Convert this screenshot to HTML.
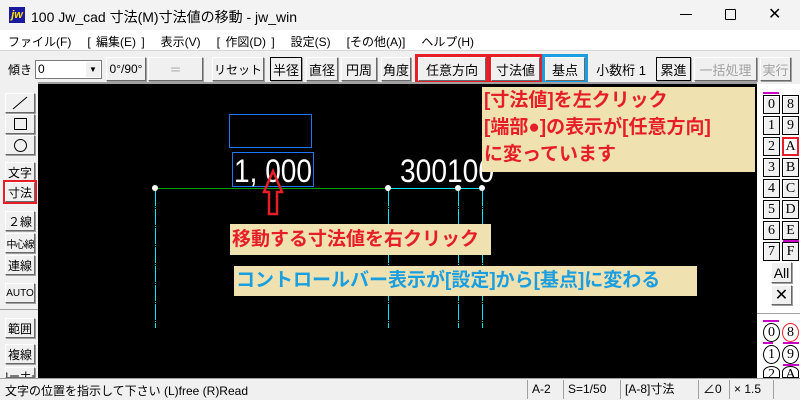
<!DOCTYPE html>
<html><head><meta charset="utf-8">
<style>
*{margin:0;padding:0;box-sizing:border-box}
body{width:800px;height:400px;overflow:hidden;background:#f0f0f0;font-family:"Liberation Sans","Noto Sans CJK JP",sans-serif;position:relative;font-size:12px;color:#000}
.a{position:absolute;white-space:nowrap}
.btn{position:absolute;background:#f0f0f0;border:1px solid #fff;border-right-color:#696969;border-bottom-color:#696969;box-shadow:1px 1px 0 #a0a0a0;display:flex;align-items:center;justify-content:center;font-size:12px;white-space:nowrap;overflow:hidden}
.tb{top:57px;height:24px}
.lb{left:5px;width:30px;height:20px;font-size:12px}
.rb{width:17px;height:19px;font-family:"Liberation Serif","Noto Serif CJK SC",serif;font-size:14px;background:#f0f0f0;border:1px solid #000;box-shadow:inset 1px 1px 0 #fff}
.note{position:absolute;background:#efe2b0;font-size:19px;font-weight:bold;line-height:27px;padding-left:2px;white-space:nowrap}
.sf{position:absolute;top:380px;height:19px;border-left:1px solid #a0a0a0;font-size:12px;padding-left:4px;line-height:18px}
</style></head><body>
<div class="a" style="left:0;top:0;width:800px;height:30px;background:#f3f3f3"></div>
<div class="a" style="left:9px;top:7px;width:16px;height:16px;background:#1a1aa0;color:#ffe000;font-size:11px;font-weight:bold;font-style:italic;line-height:16px;text-align:center">jw</div>
<div class="a" style="left:31px;top:7px;font-size:14px">100 Jw_cad 寸法(M)寸法値の移動 - jw_win</div>
<div class="a" style="left:680px;top:14px;width:12px;height:1px;background:#000"></div>
<div class="a" style="left:725px;top:9px;width:11px;height:11px;border:1px solid #000;border-radius:1px"></div>
<div class="a" style="left:768px;top:4px;font-size:16px">✕</div>
<div class="a" style="left:0;top:30px;width:800px;height:20px;background:#fff"></div>
<div class="a" style="left:8px;top:33px;font-size:12px;word-spacing:2px">ファイル(F)&nbsp;&nbsp;&nbsp;[ 編集(E) ]&nbsp;&nbsp;&nbsp;表示(V)&nbsp;&nbsp;&nbsp;[ 作図(D) ]&nbsp;&nbsp;&nbsp;設定(S)&nbsp;&nbsp;&nbsp;[その他(A)]&nbsp;&nbsp;&nbsp;ヘルプ(H)</div>
<div class="a" style="left:0;top:50px;width:800px;height:1px;background:#d8d8d8"></div>
<div class="a" style="left:8px;top:61px">傾き</div>
<div class="a" style="left:35px;top:60px;width:67px;height:19px;background:#fff;border:1px solid #7a7a7a;padding-left:2px;line-height:17px">0</div>
<div class="a" style="left:86px;top:62px;width:14px;height:15px;background:#f0f0f0;font-size:8px;text-align:center;line-height:15px">▼</div>
<div class="btn tb" style="left:106px;width:40px">0°/90°</div>
<div class="btn tb" style="left:148px;width:55px;color:#a0a0a0">＝</div>
<div class="btn tb" style="left:212px;width:52px">リセット</div>
<div class="btn tb" style="left:270px;width:32px;border:1px solid #000;font-size:13px">半径</div>
<div class="btn tb" style="left:306px;width:32px;font-size:13px">直径</div>
<div class="btn tb" style="left:341px;width:36px;font-size:13px">円周</div>
<div class="btn tb" style="left:381px;width:30px;font-size:13px">角度</div>
<div class="btn tb" style="left:418px;width:68px;font-size:13px;outline:3px solid #e61e28">任意方向</div>
<div class="btn tb" style="left:491px;width:49px;font-size:13px;outline:3px solid #e61e28">寸法値</div>
<div class="btn tb" style="left:545px;width:40px;font-size:13px;outline:3px solid #1a9ee0">基点</div>
<div class="btn tb" style="left:589px;width:64px;font-size:13px;border-color:transparent;box-shadow:none">小数桁 1</div>
<div class="btn tb" style="left:656px;width:35px;font-size:13px;border:1px solid #000">累進</div>
<div class="btn tb" style="left:694px;width:63px;font-size:13px;color:#a0a0a0">一括処理</div>
<div class="btn tb" style="left:760px;width:31px;font-size:13px;color:#a0a0a0">実行</div>
<div class="a" style="left:38px;top:82px;width:719px;height:2px;background:#a0a0a0"></div>
<div class="a" style="left:38px;top:84px;width:719px;height:294px;background:#000"></div>
<svg class="a" style="left:0;top:0" width="800" height="400">
<g stroke="#00e8f0" stroke-width="1" stroke-dasharray="16,1,1,1">
<line x1="155.5" y1="190" x2="155.5" y2="328"/><line x1="388.5" y1="190" x2="388.5" y2="328"/><line x1="458.5" y1="190" x2="458.5" y2="328"/><line x1="482.5" y1="190" x2="482.5" y2="328"/></g>
<line x1="155" y1="188.5" x2="388" y2="188.5" stroke="#00a000"/>
<line x1="388" y1="188.5" x2="483" y2="188.5" stroke="#00e8f0"/>
<g fill="#fff"><circle cx="155" cy="188" r="3"/><circle cx="388" cy="188" r="3"/><circle cx="458" cy="188" r="3"/><circle cx="482" cy="188" r="3"/></g>
<rect x="229.5" y="114.5" width="82" height="33" fill="none" stroke="#1e78ff"/>
<rect x="232.5" y="152.5" width="81" height="34" fill="none" stroke="#1e78ff"/>
<text x="234" y="182" fill="#fff" font-family="Liberation Sans,sans-serif" font-size="32" textLength="78" lengthAdjust="spacingAndGlyphs">1, 000</text>
<text x="400" y="182" fill="#fff" font-family="Liberation Sans,sans-serif" font-size="32" textLength="94" lengthAdjust="spacingAndGlyphs">300100</text>
<polygon points="273,171 282,192 277,192 277,214 269,214 269,192 264,192" fill="none" stroke="#e61e28" stroke-width="2.5"/>
</svg>
<div class="note" style="left:482px;top:87px;width:273px;height:85px;color:#e61e28">[寸法値]を左クリック<br>[端部●]の表示が[任意方向]<br>に変っています</div>
<div class="note" style="left:230px;top:224px;width:261px;height:31px;color:#e61e28;line-height:31px">移動する寸法値を右クリック</div>
<div class="note" style="left:234px;top:266px;width:463px;height:30px;color:#1a9ee0;line-height:30px">コントロールバー表示が[設定]から[基点]に変わる</div>
<div class="a" style="left:0;top:84px;width:38px;height:294px;background:#f0f0f0"></div>
<div class="btn lb" style="top:93px;height:20px"><svg width="16" height="14"><line x1="1" y1="13" x2="15" y2="1" stroke="#000"/></svg></div>
<div class="btn lb" style="top:114px"><div style="width:13px;height:12px;border:1px solid #000"></div></div>
<div class="btn lb" style="top:135px"><div style="width:13px;height:13px;border:1px solid #000;border-radius:50%"></div></div>
<div class="btn lb" style="top:162px">文字</div>
<div class="btn lb" style="top:182px;outline:2px solid #e61e28">寸法</div>
<div class="btn lb" style="top:211px">２線</div>
<div class="btn lb" style="top:233px;font-size:10px;letter-spacing:-1px">中心線</div>
<div class="btn lb" style="top:255px">連線</div>
<div class="btn lb" style="top:283px;font-size:10px">AUTO</div>
<div class="a" style="left:0;top:309px;width:38px;height:1px;background:#a0a0a0"></div>
<div class="btn lb" style="top:318px">範囲</div>
<div class="btn lb" style="top:344px">複線</div>
<div class="btn lb" style="top:367px;height:11px;align-items:flex-start;font-size:11px">コーナー</div>
<div class="a" style="left:757px;top:84px;width:43px;height:294px;background:#fff"></div>
<div class="a" style="left:763px;top:92px;width:16px;height:2px;background:#c800c8"></div>
<div class="a" style="left:783px;top:240px;width:16px;height:2px;background:#c800c8"></div>
<div class="btn" style="left:771px;top:262px;width:21px;height:21px;font-size:14px">All</div>
<div class="btn" style="left:771px;top:285px;width:21px;height:20px;font-size:16px">✕</div>
<div class="a" style="left:757px;top:313px;width:43px;height:1px;background:#a0a0a0"></div>
<div class="a" style="left:0;top:378px;width:800px;height:22px;background:#f0f0f0;border-top:1px solid #a0a0a0"></div>
<div class="a" style="left:5px;top:382px;font-size:12px">文字の位置を指示して下さい (L)free (R)Read</div>
<div class="sf" style="left:527px;width:36px">A-2</div>
<div class="sf" style="left:563px;width:57px">S=1/50</div>
<div class="sf" style="left:620px;width:78px">[A-8]寸法</div>
<div class="sf" style="left:698px;width:31px">∠0</div>
<div class="sf" style="left:729px;width:44px">× 1.5</div>
<div class="sf" style="left:773px;width:27px"></div>
<div style="position:absolute;left:0;top:0">
<div class="a rb" style="left:763px;top:95px;display:flex;align-items:center;justify-content:center">0</div>
<div class="a rb" style="left:782px;top:95px;display:flex;align-items:center;justify-content:center">8</div>
<div class="a rb" style="left:763px;top:116px;display:flex;align-items:center;justify-content:center">1</div>
<div class="a rb" style="left:782px;top:116px;display:flex;align-items:center;justify-content:center">9</div>
<div class="a rb" style="left:763px;top:137px;display:flex;align-items:center;justify-content:center">2</div>
<div class="a rb" style="left:782px;top:137px;display:flex;align-items:center;justify-content:center;background:#fff;border:2px solid #e61e28">A</div>
<div class="a rb" style="left:763px;top:158px;display:flex;align-items:center;justify-content:center">3</div>
<div class="a rb" style="left:782px;top:158px;display:flex;align-items:center;justify-content:center">B</div>
<div class="a rb" style="left:763px;top:179px;display:flex;align-items:center;justify-content:center">4</div>
<div class="a rb" style="left:782px;top:179px;display:flex;align-items:center;justify-content:center">C</div>
<div class="a rb" style="left:763px;top:200px;display:flex;align-items:center;justify-content:center">5</div>
<div class="a rb" style="left:782px;top:200px;display:flex;align-items:center;justify-content:center">D</div>
<div class="a rb" style="left:763px;top:221px;display:flex;align-items:center;justify-content:center">6</div>
<div class="a rb" style="left:782px;top:221px;display:flex;align-items:center;justify-content:center">E</div>
<div class="a rb" style="left:763px;top:242px;display:flex;align-items:center;justify-content:center">7</div>
<div class="a rb" style="left:782px;top:242px;display:flex;align-items:center;justify-content:center">F</div>
<div class="a" style="left:763px;top:320px;width:16px;height:2px;background:#c800c8"></div>
<div class="a" style="left:763px;top:342px;width:10px;height:2px;background:#c800c8"></div>
<div class="a" style="left:783px;top:342px;width:16px;height:2px;background:#c800c8"></div>
<div class="a" style="left:783px;top:364px;width:16px;height:2px;background:#c800c8"></div>
<div class="a rb" style="left:763px;top:323px;border-radius:50%;display:flex;align-items:center;justify-content:center;background:#fff">0</div>
<div class="a rb" style="left:782px;top:323px;border-radius:50%;display:flex;align-items:center;justify-content:center;background:#fff;border:1px solid #e61e28">8</div>
<div class="a rb" style="left:763px;top:345px;border-radius:50%;display:flex;align-items:center;justify-content:center;background:#fff">1</div>
<div class="a rb" style="left:782px;top:345px;border-radius:50%;display:flex;align-items:center;justify-content:center;background:#fff">9</div>
<div class="a rb" style="left:763px;top:366px;height:12px;border-radius:50% 50% 0 0;overflow:hidden;display:flex;justify-content:center;background:#fff">2</div>
<div class="a rb" style="left:782px;top:366px;height:12px;border-radius:50% 50% 0 0;overflow:hidden;display:flex;justify-content:center;background:#fff">A</div>
</div>
</body></html>
